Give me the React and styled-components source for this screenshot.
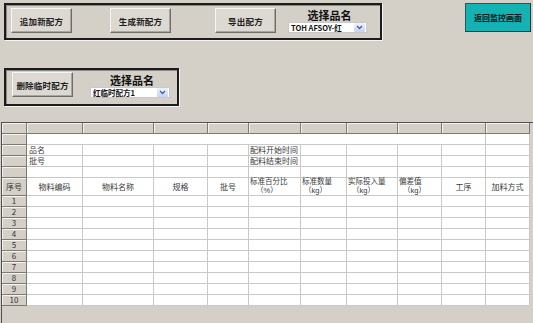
import React from 'react';
import styled, { createGlobalStyle } from 'styled-components';

const GlobalStyle = createGlobalStyle`
  html, body {
    margin: 0;
    padding: 0;
    background: #d4d0c8;
    font-family: "Noto Sans CJK SC", "Liberation Sans", sans-serif;
    overflow: hidden;
  }
`;

const Page = styled.div`
  width: 533px;
  height: 323px;
  background: #d4d0c8;
  overflow: hidden;
`;

const TopRow = styled.div`
  display: flex;
  align-items: flex-start;
  padding: 3px 2px 0 4px;
`;

const Panel = styled.div`
  box-sizing: border-box;
  display: flex;
  align-items: flex-start;
  width: ${p => p.$w}px;
  height: ${p => p.$h}px;
  margin: ${p => p.$margin || '0'};
  padding: ${p => p.$pad};
  border: 2px solid #1c1c1c;
  box-shadow: inset 1px 1px 0 #8a8a8a, 1px 1px 0 #f4f4f4;
`;

const Button = styled.div`
  box-sizing: border-box;
  width: 61px;
  height: 25px;
  margin-left: ${p => p.$ml || 0}px;
  display: flex;
  align-items: center;
  justify-content: center;
  background: #dcd9d3;
  border-top: 1px solid #f6f5f2;
  border-left: 1px solid #f6f5f2;
  border-right: 1px solid #6f6d68;
  border-bottom: 1px solid #6f6d68;
  box-shadow: inset -1px -1px 0 #a9a6a0;
  font-size: 8.5px;
  font-weight: 700;
  color: #1e1e1e;
  letter-spacing: 0.2px;
`;

const PickGroup = styled.div`
  display: flex;
  flex-direction: column;
  align-items: center;
  margin-left: ${p => p.$ml}px;
  width: ${p => p.$w}px;
  padding-top: ${p => p.$top}px;
`;

const PickLabel = styled.div`
  font-size: 11px;
  font-weight: 700;
  line-height: 14px;
  height: 14px;
  color: #111;
  padding-left: 4px;
`;

const SelectBox = styled.div`
  box-sizing: border-box;
  align-self: stretch;
  height: 11px;
  display: flex;
  align-items: center;
  background: #fff;
  border: 1px solid #c9c9c9;
  padding-left: 2px;
  font-family: "Noto Sans CJK SC", "Liberation Serif", serif;
  font-size: 7.5px;
  font-weight: 700;
  color: #111;
  white-space: nowrap;
`;

const SelectText = styled.span`
  flex: 1;
  overflow: hidden;
`;

const ArrowBtn = styled.div`
  box-sizing: border-box;
  width: 11px;
  height: 9px;
  margin-right: 1px;
  display: flex;
  align-items: center;
  justify-content: center;
  background: linear-gradient(#eef2fd, #c4d3f6);
  border-radius: 1px;
`;

const TealButton = styled.div`
  box-sizing: border-box;
  margin-left: auto;
  width: 66px;
  height: 29px;
  display: flex;
  align-items: center;
  justify-content: center;
  background: #14b2b2;
  border: 1px solid #2b5555;
  border-right-color: #1d3d3d;
  border-bottom-color: #1d3d3d;
  font-size: 8px;
  font-weight: 700;
  color: #151515;
`;

const GridFrame = styled.div`
  margin: 16px 0 0 1px;
  height: 201px;
  border-left: 1px solid #505050;
  border-top: 1px solid #505050;
  background: #d4d0c8;
`;

const Table = styled.table`
  table-layout: fixed;
  width: 528px;
  border-collapse: separate;
  border-spacing: 0;
  font-size: 8px;
  color: #3a3a3a;
`;

const Row = styled.tr`
  height: ${p => p.$h || 11}px;
`;

const HeadCell = styled.td`
  box-sizing: border-box;
  padding: 0;
  background: #d4d0c8;
  border-right: 1px solid #7c7a76;
  border-bottom: 1px solid #7c7a76;
  box-shadow: inset 1px 1px 0 #f4f3f0;
  text-align: center;
  font-size: 8px;
  color: #333;
  line-height: 10px;
`;

const Cell = styled.td`
  box-sizing: border-box;
  padding: 0 0 0 ${p => p.$pl || 0}px;
  background: #fff;
  border-right: 1px solid #c9c9c9;
  border-bottom: 1px solid #c9c9c9;
  text-align: ${p => p.$align || 'left'};
  white-space: nowrap;
  overflow: visible;
  line-height: 10px;
  vertical-align: middle;
`;

const TwoLine = styled.div`
  display: flex;
  flex-direction: column;
  padding-left: 1px;
  text-align: left;
`;

const Line = styled.div`
  height: 8.5px;
  font-family: "Liberation Sans", "Noto Sans CJK SC", sans-serif;
  font-size: 7.5px;
  line-height: 8.5px;
  padding-left: ${p => p.$pl || 0}px;
`;

const Chevron = () => (
  <svg width="7" height="5" viewBox="0 0 7 5">
    <path d="M1 1 L3.5 3.5 L6 1" fill="none" stroke="#4a5f8f" strokeWidth="1.3" />
  </svg>
);

const Select = ({ value }) => (
  <SelectBox>
    <SelectText>{value}</SelectText>
    <ArrowBtn><Chevron /></ArrowBtn>
  </SelectBox>
);

const widths = [25, 56, 71, 54, 41, 52, 46, 51, 44, 44, 44];

const twoLineHeads = [
  ['标准百分比', '（%）', 6],
  ['标准数量', '（kg）', 2],
  ['实际投入量', '（kg）', 4],
  ['偏差值', '（kg）', 4],
];

export default function App() {
  const blanks = n => Array.from({ length: n }, (_, i) => <Cell key={i} />);

  return (
    <Page>
      <GlobalStyle />
      <TopRow>
        <Panel $w={378} $h={37} $pad="3px 0 0 5px">
          <Button>追加新配方</Button>
          <Button $ml={38}>生成新配方</Button>
          <Button $ml={44}>导出配方</Button>
          <PickGroup $ml={12} $w={79} $top={0}>
            <PickLabel>选择品名</PickLabel>
            <Select value="TOH AFSOY-红" />
          </PickGroup>
        </Panel>
        <TealButton>返回监控画面</TealButton>
      </TopRow>

      <Panel $w={175} $h={38} $pad="2px 0 0 6px" $margin="28px 0 0 4px">
        <Button>删除临时配方</Button>
        <PickGroup $ml={17} $w={80} $top={1}>
          <PickLabel>选择品名</PickLabel>
          <Select value="红临时配方1" />
        </PickGroup>
      </Panel>

      <GridFrame>
        <Table>
          <colgroup>
            {widths.map((w, i) => <col key={i} style={{ width: w }} />)}
          </colgroup>
          <tbody>
            <Row>
              {widths.map((_, i) => <HeadCell key={i} />)}
            </Row>
            <Row>
              <HeadCell />
              <Cell colSpan={9} />
              <Cell />
            </Row>
            <Row>
              <HeadCell />
              <Cell $pl={2}>品名</Cell>
              {blanks(3)}
              <Cell $pl={1}>配料开始时间</Cell>
              {blanks(5)}
            </Row>
            <Row>
              <HeadCell />
              <Cell $pl={2}>批号</Cell>
              {blanks(3)}
              <Cell $pl={1}>配料结束时间</Cell>
              {blanks(5)}
            </Row>
            <Row>
              <HeadCell />
              {blanks(10)}
            </Row>
            <Row $h={18}>
              <HeadCell>序号</HeadCell>
              <Cell $align="center">物料编码</Cell>
              <Cell $align="center">物料名称</Cell>
              <Cell $align="center">规格</Cell>
              <Cell $align="center">批号</Cell>
              {twoLineHeads.map(([a, b, pl]) => (
                <Cell key={a}>
                  <TwoLine>
                    <Line>{a}</Line>
                    <Line $pl={pl}>{b}</Line>
                  </TwoLine>
                </Cell>
              ))}
              <Cell $align="center">工序</Cell>
              <Cell $align="center">加料方式</Cell>
            </Row>
            {Array.from({ length: 10 }, (_, r) => (
              <Row key={r}>
                <HeadCell>{r + 1}</HeadCell>
                {blanks(10)}
              </Row>
            ))}
          </tbody>
        </Table>
      </GridFrame>
    </Page>
  );
}
